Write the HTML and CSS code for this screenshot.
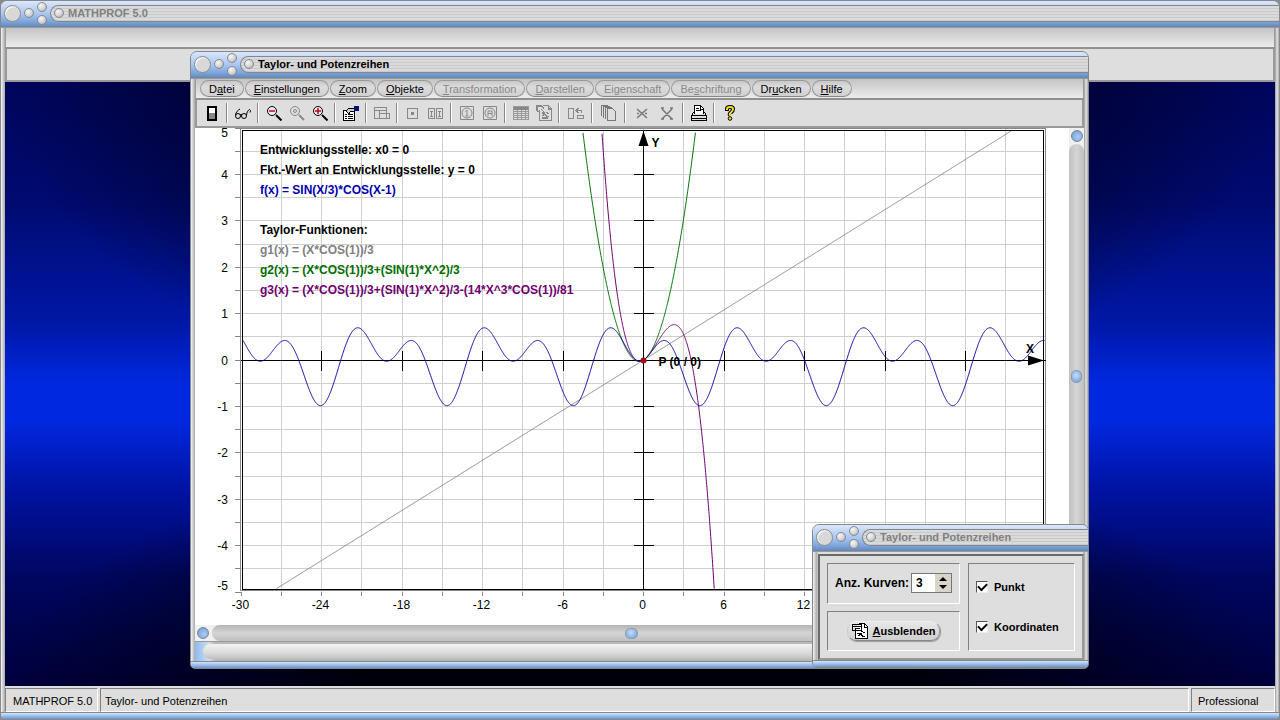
FILE: index.html
```
<!DOCTYPE html>
<html lang="de">
<head>
  <meta charset="UTF-8">
  <title>MATHPROF 5.0</title>
  <link rel="stylesheet" href="styles.css">
</head>
<body>

<div class="window app">
  <header class="titlebar inactive">
    <button class="ball big" aria-label="Schließen"></button>
    <button class="ball" aria-label="Symbol"></button>
    <span class="stack">
      <button class="ball" aria-label="Maximieren"></button>
      <button class="ball" aria-label="Minimieren"></button>
    </span>
    <h1 class="caption"><span class="ball knob"></span>MATHPROF 5.0</h1>
  </header>
  <div class="menubar"></div>
  <div class="toolbar app-toolbar"></div>
  <main class="desktop"></main>
  <footer class="statusbar">
    <span class="pane pane-name">MATHPROF 5.0</span>
    <span class="pane pane-module">Taylor- und Potenzreihen</span>
    <span class="pane pane-edition">Professional</span>
  </footer>
</div>

<section class="window taylor">
  <header class="titlebar">
    <button class="ball big" aria-label="Schließen"></button>
    <button class="ball" aria-label="Symbol"></button>
    <span class="stack">
      <button class="ball" aria-label="Maximieren"></button>
      <button class="ball" aria-label="Minimieren"></button>
    </span>
    <h2 class="caption"><span class="ball knob"></span>Taylor- und Potenzreihen</h2>
  </header>

  <nav class="menubar">
    <button>D<u>a</u>tei</button>
    <button><u>E</u>instellungen</button>
    <button><u>Z</u>oom</button>
    <button><u>O</u>bjekte</button>
    <button disabled><u>T</u>ransformation</button>
    <button disabled><u>D</u>arstellen</button>
    <button disabled>Ei<u>g</u>enschaft</button>
    <button disabled>Be<u>s</u>chriftung</button>
    <button>Dr<u>u</u>cken</button>
    <button><u>H</u>ilfe</button>
  </nav>

  <div class="toolbar">
    <button aria-label="Beenden"><svg viewBox="0 0 16 16"><path d="M3 1h10v15H3z" fill="#000"/><path d="M5 3h6v5H5z" fill="#fff"/><path d="M5 8h6v6H5z" fill="#888"/></svg></button>
    <i class="sep"></i>
    <button aria-label="Ansicht"><svg class="smooth" viewBox="0 0 16 16"><g fill="none" stroke="#000"><circle cx="3" cy="11" r="2.500"/><circle cx="9" cy="11" r="2.500"/><path d="M5 10q1-1 2 0M.5 10C1 7 3 5 5 4M11.500 10C12 7 13 5 14.500 4.500l1 1-.5 2"/></g></svg></button>
    <i class="sep"></i>
    <button aria-label="Verkleinern"><svg class="smooth" viewBox="0 0 16 16"><circle cx="6" cy="6" r="4.500" fill="#eee" stroke="#000"/><path d="M10 10l5.500 5.500" stroke="#000" stroke-width="2"/><path d="M3 6h6" stroke="#c00020" stroke-width="1.500"/></svg></button>
    <button disabled aria-label="Original"><svg class="smooth" viewBox="0 0 16 16"><circle cx="6" cy="6" r="4.500" fill="none" stroke="#888"/><circle cx="6" cy="6" r="1.500" fill="none" stroke="#888"/><path d="M10 10l5 5" stroke="#888" stroke-width="2"/></svg></button>
    <button aria-label="Vergrößern"><svg class="smooth" viewBox="0 0 16 16"><circle cx="6" cy="6" r="4.500" fill="#eee" stroke="#000"/><path d="M10 10l5.500 5.500" stroke="#000" stroke-width="2"/><path d="M3 6h6M6 3v6" stroke="#c00020" stroke-width="1.500"/></svg></button>
    <i class="sep"></i>
    <button aria-label="Eigenschaften"><svg viewBox="0 0 16 16"><path d="M.5 5.500h11v10H.5z" fill="#fff" stroke="#000"/><path d="M2 9h2M5 9h5M2 11h2M5 11h5M2 13h2M5 13h5" stroke="#000"/><path d="M3 6l3-3h5v3l-4 1-1 2z" fill="#ccc" stroke="#000"/><path d="M11 1h5v5h-5z" fill="#101070"/></svg></button>
    <i class="sep"></i>
    <button disabled aria-label="Fenster"><svg viewBox="0 0 16 16"><path d="M.5 2.500h12v11H.5zM1 5.500h12M5.500 6v7M5.500 8.500h10v5h-10z" fill="none" stroke="#888"/></svg></button>
    <i class="sep"></i>
    <button disabled aria-label="Punkt"><svg viewBox="0 0 16 16"><path d="M2.500 3.500h10v10h-10z" fill="none" stroke="#888"/><path d="M6 7h3v3H6z" fill="#888"/></svg></button>
    <button disabled aria-label="Punkte"><svg viewBox="0 0 16 16"><path d="M.5 3.500h6v10h-6zM8.500 3.500h6v10h-6zM2 6h3M2 11h3M10 6h3M10 11h3M3.500 6v5M11.500 6v5" fill="none" stroke="#888"/></svg></button>
    <i class="sep"></i>
    <button disabled aria-label="Text"><svg class="smooth" viewBox="0 0 16 16"><path d="M1.500 1.500h13v13h-13zM6.500 6.500L8 5v6M6.500 11h3" fill="none" stroke="#888"/><circle cx="8" cy="8" r="5" fill="none" stroke="#888"/></svg></button>
    <button disabled aria-label="Beschriftung"><svg class="smooth" viewBox="0 0 16 16"><path d="M1.500 1.500h13v13h-13zM6 11V6h4v5M6 8.500h4" fill="none" stroke="#888"/><circle cx="8" cy="8" r="5" fill="none" stroke="#888"/></svg></button>
    <i class="sep"></i>
    <button disabled aria-label="Tabelle"><svg viewBox="0 0 16 16"><path d="M.5 1.500h15v13H.5zM1 6.500h14M1 8.500h14M1 10.500h14M1 12.500h14M4.500 5v9M8.500 5v9M12.500 5v9" fill="none" stroke="#999"/><path d="M1 2h14v3H1z" fill="#888"/></svg></button>
    <button disabled aria-label="Dokument"><svg viewBox="0 0 16 16"><path d="M3.500 5v10.500h12V3.500l-3-3h-6M12.500 1v3h3M0 1h6l2 3M1 1v5l2 1M5 4l3 3M6 8h3M10 7l3 2M6 11l3-2 2 3 2-1M6 13h6" fill="none" stroke="#888" stroke-width="1.300"/></svg></button>
    <i class="sep"></i>
    <button class="wide" disabled aria-label="Verschieben"><svg viewBox="0 0 16 16"><path d="M.5 3.500h5v10h-5zM9.500 10.500h6v3h-6zM8 5.500h5.500V8M10.500 3L8 5.500 10.500 8" fill="none" stroke="#888"/></svg></button>
    <i class="sep"></i>
    <button class="wide" disabled aria-label="Kopieren"><svg viewBox="0 0 16 16"><path d="M6.500 3.500h5l3 3v9h-8zM4.500 14V2.500h6M2.500 12.500V1.500h6M.5 11V.5h6" fill="none" stroke="#777"/></svg></button>
    <i class="sep"></i>
    <button class="wide" disabled aria-label="Löschen"><svg class="smooth" viewBox="0 0 16 16"><path d="M3 4l10 9M13 4L3 13M3 8.500h2M11 8.500h2" stroke="#777" stroke-width="1.500"/></svg></button>
    <button class="wide" disabled aria-label="Alles löschen"><svg class="smooth" viewBox="0 0 16 16"><path d="M3 4l10 10M13 4L3 14M2 3h3M11 3h3M2 14h3M11 14h3" stroke="#777" stroke-width="1.500"/></svg></button>
    <i class="sep"></i>
    <button aria-label="Drucken"><svg viewBox="0 0 16 16"><path d="M3.500 8.500v-8h6l3 3v5" fill="#fff" stroke="#000"/><path d="M5 3h3M5 5h5M9.500 1v3h3" stroke="#000" fill="none"/><path d="M2.500 7.500L.5 10.500v5h15v-5l-2-3M1 10.500h15M1 13h15" fill="none" stroke="#000"/></svg></button>
    <i class="sep"></i>
    <button aria-label="Hilfe"><svg class="smooth" viewBox="0 0 16 16"><path d="M5 6V4q0-2 3-2t3 2q0 2-2 3.500T8 10" fill="none" stroke="#000" stroke-width="4"/><path d="M5 5V4q0-2 3-2t3 2q0 2-2 3.500T8 10" fill="none" stroke="#f0e020" stroke-width="2"/><circle cx="8" cy="13.500" r="1.800" fill="#f0e020" stroke="#000"/></svg></button>
  </div>

  <div class="workspace">
    <div class="plot">
      <svg id="chart"></svg>
      <div class="legend">
        <p>Entwicklungsstelle: x0 = 0</p>
        <p>Fkt.-Wert an Entwicklungsstelle: y = 0</p>
        <p class="f">f(x) = SIN(X/3)*COS(X-1)</p>
        <p class="gap">Taylor-Funktionen:</p>
        <p class="g1">g1(x) = (X*COS(1))/3</p>
        <p class="g2">g2(x) = (X*COS(1))/3+(SIN(1)*X^2)/3</p>
        <p class="g3">g3(x) = (X*COS(1))/3+(SIN(1)*X^2)/3-(14*X^3*COS(1))/81</p>
      </div>
    </div>
    <div class="scroll scroll-y">
      <button class="dot" aria-label="Nach oben"></button>
      <input type="range" aria-label="Vertikal verschieben" value="50">
      <button class="dot" aria-label="Nach unten"></button>
    </div>
  </div>
  <div class="scroll scroll-x">
    <button class="dot" aria-label="Nach links"></button>
    <input type="range" aria-label="Horizontal verschieben" value="49">
    <button class="dot" aria-label="Nach rechts"></button>
  </div>
  <div class="hint"></div>
</section>

<section class="window tool">
  <header class="titlebar inactive">
    <button class="ball big" aria-label="Schließen"></button>
    <button class="ball" aria-label="Symbol"></button>
    <span class="stack">
      <button class="ball" aria-label="Maximieren"></button>
      <button class="ball" aria-label="Minimieren"></button>
    </span>
    <h2 class="caption"><span class="ball knob"></span>Taylor- und Potenzreihen</h2>
  </header>
  <form class="panel">
    <div class="group count">
      <label for="curves">Anz. Kurven:</label>
      <span class="spin">
        <input type="text" id="curves" value="3">
        <span class="arrows">
          <button type="button" class="up" aria-label="Mehr"></button>
          <button type="button" class="down" aria-label="Weniger"></button>
        </span>
      </span>
    </div>
    <div class="group options">
      <label><input type="checkbox" checked>Punkt</label>
      <label><input type="checkbox" checked>Koordinaten</label>
    </div>
    <div class="group action">
      <button type="button" class="hide">
        <svg viewBox="0 0 16 16"><path d="M3.500 5v10.500h12V3.500l-3-3h-6" fill="#fff" stroke="#000"/><path d="M.5 1.500h9v6h-9zM1 3.500h8M3 5.500h5M12.500 1v3h3M5 10h5M9 8l4 2M6 13l3-2 2 3 2-1" fill="none" stroke="#000"/></svg>
        <span><u>A</u>usblenden</span>
      </button>
    </div>
  </form>
</section>

<script>
  const chart = document.getElementById('chart');
  const margin = { left: 46, right: 23, top: 0, bottom: 33 };
  const xMax = 30;
  const yMax = 5;

  const curves = [
    { color: '#808080', f: x => x * Math.cos(1) / 3 },
    { color: '#007000', f: x => x * Math.cos(1) / 3 + Math.sin(1) * x * x / 3 },
    { color: '#700070', f: x => x * Math.cos(1) / 3 + Math.sin(1) * x * x / 3 - 14 * x ** 3 * Math.cos(1) / 81 },
    { color: '#0000a0', f: x => Math.sin(x / 3) * Math.cos(x - 1) }
  ];

  function add(name, attrs, text) {
    const el = document.createElementNS('http://www.w3.org/2000/svg', name);
    for (const key in attrs) {
      el.setAttribute(key, attrs[key]);
    }
    if (text !== undefined) {
      el.textContent = text;
    }
    chart.appendChild(el);
  }

  function line(x1, y1, x2, y2, cls) {
    add('path', { d: `M${x1} ${y1}L${x2} ${y2}`, class: cls });
  }

  function drawChart() {
    chart.innerHTML = '';

    const left = margin.left;
    const top = margin.top;
    const right = chart.clientWidth - margin.right;
    const bottom = chart.clientHeight - margin.bottom;
    const px = x => left + (x + xMax) / (2 * xMax) * (right - left);
    const py = y => top + (yMax - y) / (2 * yMax) * (bottom - top);
    const snap = v => Math.floor(v) + 0.5;

    // grid and outer ticks
    for (let x = -xMax; x <= xMax; x += 3) {
      const gx = snap(px(x));
      if (Math.abs(x) < xMax) line(gx, top, gx, bottom, 'grid');
      line(gx, bottom, gx, bottom + 4, 'tick');
      if (x % 6 === 0) add('text', { x: gx - 1, y: bottom + 17, class: 'label-x' }, x);
    }
    for (let i = -yMax * 2; i <= yMax * 2; i++) {
      const gy = snap(py(i / 2));
      if (Math.abs(i) < yMax * 2) line(left, gy, right, gy, 'grid');
      line(left - 6, gy, left, gy, 'tick');
      if (i % 2 === 0) {
        // keep the outermost labels inside the frame
        const shift = i === 10 ? 8 : i === -10 ? -3 : 4;
        add('text', { x: left - 13, y: gy + shift, class: 'label-y' }, i / 2);
      }
    }

    add('rect', { x: left - 0.5, y: top + 0.5, width: right - left, height: bottom - top - 2, class: 'bevel' });
    add('rect', { x: left + 1.5, y: top + 2.5, width: right - left - 4, height: bottom - top - 5, class: 'frame' });

    // axes
    const ox = snap(px(0));
    const oy = snap(py(0));
    line(left, oy, right, oy, 'axis');
    line(ox, top + 3, ox, bottom - 2, 'axis');
    for (let x = -24; x <= 24; x += 6) {
      if (x) line(snap(px(x)), oy - 10, snap(px(x)), oy + 10, 'axis');
    }
    for (let y = -4; y <= 4; y++) {
      if (y) line(ox - 10, snap(py(y)), ox + 10, snap(py(y)), 'axis');
    }
    add('path', { d: `M${ox} ${top + 3}l5 15h-10z` });
    add('path', { d: `M${right - 2} ${oy}l-16 5v-10z` });

    curves.forEach(curve => {
      let d = '';
      let pen = 'M';
      for (let x = -xMax + 0.15; x < xMax - 0.1; x += 0.02) {
        const y = curve.f(x);
        if (Math.abs(y) > 4.93) {
          pen = 'M';
          continue;
        }
        d += `${pen}${px(x).toFixed(2)} ${py(y).toFixed(2)}`;
        pen = 'L';
      }
      add('path', { d: d, stroke: curve.color, class: 'curve' });
    });

    add('circle', { cx: ox, cy: oy, r: 3, fill: '#a01010' });
    add('text', { x: ox + 15, y: oy + 5, class: 'mark' }, 'P (0 / 0)');
    add('text', { x: ox + 8, y: top + 19, class: 'mark' }, 'Y');
    add('text', { x: right - 20, y: oy - 8, class: 'mark' }, 'X');
  }

  window.addEventListener('resize', drawChart);
  drawChart();
</script>

</body>
</html>
```
FILE: styles.css
```
* {
  box-sizing: border-box;
}

body {
  margin: 0;
  height: 100vh;
  position: relative;
  overflow: hidden;
  background: #8a8a8a;
  font: 11px "Liberation Sans", Arial, sans-serif;
  color: #000;
}

button, input {
  font: inherit;
  color: inherit;
  margin: 0;
  padding: 0;
}

h1, h2, p {
  margin: 0;
  font-size: 11px;
}

/* window chrome */
.window {
  display: flex;
  flex-direction: column;
  border: 1px solid #85888f;
  border-radius: 7px 7px 5px 5px;
  background: linear-gradient(90deg, #f4f4f4, #a8a8a8 4px, #dedede 5px, #dedede calc(100% - 5px), #999 calc(100% - 4px), #e4e4e4 calc(100% - 2px), #aaa);
  overflow: hidden;
}

.window::after {
  content: "";
  height: 6px;
  flex: none;
  border-top: 1px solid #888;
  background: linear-gradient(#d4e4f8, #a4c6f2 40%, #6f93c2);
}

.app {
  height: 100vh;
}

.taylor {
  position: absolute;
  left: 190px;
  top: 51px;
  width: 899px;
  height: 618px;
}

.tool {
  position: absolute;
  left: 812px;
  top: 524px;
  width: 277px;
  height: 144px;
}

.titlebar {
  flex: none;
  height: 27px;
  display: flex;
  align-items: center;
  gap: 3px;
  padding: 0 0 2px 3px;
  border-bottom: 1px solid #999;
  background: linear-gradient(#dbe7fb, #ccdcf5 15%, #a9c6ee 50%, #7ba5dc 80%, #6686b3);
}

.ball {
  flex: none;
  width: 10px;
  height: 10px;
  border: 1px solid #848b95;
  border-radius: 50%;
  background: radial-gradient(circle at 35% 30%, #f6f6f6, #d4d4d4 55%, #9c9c9c);
}

.ball.big {
  width: 17px;
  height: 17px;
  background: #d8d8d6;
  box-shadow: inset 1px 1px 1px #fff;
}

.stack {
  display: flex;
  flex-direction: column;
  gap: 3px;
}

.caption {
  flex: 1;
  height: 17px;
  display: flex;
  align-items: center;
  gap: 4px;
  padding-left: 3px;
  border: 1px solid #808790;
  border-right: 0;
  border-radius: 9px 0 0 9px;
  background: repeating-linear-gradient(#dadada, #dadada 2px, #cacaca 2px, #cacaca 3px);
  line-height: 15px;
}

.inactive .caption {
  color: #808080;
}

.menubar {
  flex: none;
  height: 21px;
  margin: 0 4px;
  display: flex;
  align-items: center;
  gap: 1px;
  padding-left: 4px;
  border-bottom: 2px solid #909090;
  border-left: 1px solid #999;
  border-right: 1px solid #999;
  background: linear-gradient(#c4c4c4, #ececec);
}

.menubar button {
  height: 17px;
  padding: 0 8px;
  border: 1px solid #999;
  border-bottom-color: #888;
  border-radius: 9px;
  background: linear-gradient(#c8c8c8, #dcdcdc 40%, #d0d0d0);
  line-height: 14px;
}

button:disabled {
  color: #888;
}

.toolbar {
  flex: none;
  height: 28px;
  margin: 0 4px;
  display: flex;
  align-items: center;
  padding-left: 3px;
  border: 1px solid #999;
  border-width: 0 2px 2px;
  background: #dedede;
}

.app-toolbar {
  height: 33px;
}

.toolbar button {
  width: 23px;
  height: 20px;
  border: 0;
  background: none;
}

.toolbar button.wide {
  width: 25px;
}

.toolbar svg, .hide svg {
  width: 16px;
  height: 16px;
  display: block;
  margin: 0 auto;
  shape-rendering: crispEdges;
}

.toolbar svg.smooth {
  shape-rendering: auto;
}

.sep {
  width: 2px;
  height: 20px;
  margin: 0 3px;
  border-left: 1px solid #888;
  border-right: 1px solid #fff;
}

.desktop {
  flex: 1;
  margin: 0 4px;
  background:
    radial-gradient(ellipse 50% 55% at 50% 0, #000018 40%, transparent),
    radial-gradient(ellipse 50% 40% at 50% 100%, #000008 40%, transparent),
    linear-gradient(#00055c, #000a70 20%, #0018a8 40%, #0028e0 50%, #0028e0 56%, #0012a0 68%, #000660 82%, #00003c);
}

.statusbar {
  flex: none;
  height: 26px;
  margin: 0 4px;
  padding-top: 2px;
  display: flex;
  gap: 2px;
  background: #dedede;
}

.pane {
  border: 1px solid;
  border-color: #808080 #fff #fff #808080;
  line-height: 24px;
  padding-left: 6px;
}

.pane-name {
  width: 93px;
  padding-left: 7px;
}

.pane-module {
  flex: 1;
  padding-left: 4px;
}

.pane-edition {
  width: 84px;
}

/* chart window */
.workspace {
  flex: 1;
  min-height: 0;
  display: flex;
  margin: 0 4px;
}

.plot {
  flex: 1;
  position: relative;
  background: #fff;
}

.plot svg {
  display: block;
  width: 100%;
  height: 100%;
}

.legend {
  position: absolute;
  left: 65px;
  top: 12px;
  line-height: 20px;
  font-weight: bold;
}

.legend p {
  font-size: 12px;
}

.legend .gap {
  margin-top: 20px;
}

.f {
  color: #0000b0;
}

.g1 {
  color: #808080;
}

.g2 {
  color: #007000;
}

.g3 {
  color: #700070;
}

.grid, .tick, .axis, .bevel, .frame {
  fill: none;
  shape-rendering: crispEdges;
}

.grid {
  stroke: #cfcfcf;
}

.tick, .bevel {
  stroke: #888;
}

.axis, .frame {
  stroke: #000;
}

.curve {
  fill: none;
}

.label-x {
  font-size: 12px;
  text-anchor: middle;
}

.label-y {
  font-size: 12px;
  text-anchor: end;
}

.mark {
  font-size: 12px;
  font-weight: bold;
}

.scroll {
  display: flex;
  align-items: center;
  background: #f0f0f0;
}

.scroll-y {
  width: 15px;
  flex-direction: column;
  padding: 2px 0;
}

.scroll-x {
  flex: none;
  height: 16px;
  margin: 0 4px;
  padding: 0 2px;
}

.dot {
  flex: none;
  width: 12px;
  height: 12px;
  border: 1px solid #7b8794;
  border-radius: 50%;
  background: radial-gradient(circle at 60% 60%, #a8ccf8, #6f98cf);
}

.scroll input {
  appearance: none;
  flex: 1;
  min-width: 0;
  min-height: 0;
  border-radius: 8px;
}

.scroll-x input {
  height: 16px;
  margin: 0 3px;
  background: linear-gradient(#b4b4b4, #d4d4d4 50%, #c0c0c0);
}

.scroll-y input {
  writing-mode: vertical-lr;
  width: 15px;
  margin: 2px 0;
  background: linear-gradient(90deg, #c0c0c0, #d4d4d4 50%, #c0c0c0);
}

.scroll input::-webkit-slider-thumb {
  appearance: none;
  width: 13px;
  height: 11px;
  border: 1px solid #8a9bb0;
  border-radius: 5px;
  background: radial-gradient(circle at 45% 40%, #c4defc, #6f98cf);
}

.scroll-y input::-webkit-slider-thumb {
  width: 11px;
  height: 13px;
}

.hint {
  flex: none;
  height: 20px;
  margin: 0 4px;
  padding: 2px 0 2px 8px;
  border-top: 1px solid #999;
  background: linear-gradient(90deg, #8fb9ee, #cfdff2 14px, #b8b8b8 20px);
}

.hint::before {
  content: "";
  display: block;
  height: 100%;
  border-radius: 9px 0 0 9px;
  background: linear-gradient(#f2f2f2, #dadada 60%, #c0c0c0);
}

/* tool window */
.panel {
  flex: 1;
  margin: 2px 4px 0 5px;
  padding: 7px;
  display: grid;
  grid-template-columns: 133px 1fr;
  grid-template-rows: 1fr 1fr;
  gap: 7px 8px;
  border: 2px solid;
  border-color: #6a6a6a #999 #999 #6a6a6a;
  background: #dedede;
  font-weight: bold;
}

.group {
  border: 1px solid;
  border-color: #808080 #fff #fff #808080;
  display: flex;
  align-items: center;
}

.count {
  gap: 2px;
  padding-left: 7px;
}

.count label {
  font-size: 12px;
}

.spin {
  display: flex;
  width: 41px;
  height: 20px;
  border: 1px solid #777;
  background: #fff;
}

.spin input {
  width: 23px;
  border: 0;
  padding-left: 4px;
  background: #fff;
  font-size: 12px;
}

.arrows {
  flex: 1;
  display: flex;
  flex-direction: column;
  justify-content: center;
  align-items: center;
  gap: 4px;
  background: #d8d4c8;
}

.arrows button {
  width: 0;
  height: 0;
  border: 4px solid transparent;
  background: none;
}

.arrows .up {
  border-top: 0;
  border-bottom-color: #000;
}

.arrows .down {
  border-bottom: 0;
  border-top-color: #000;
}

.options {
  grid-row: 1 / 3;
  grid-column: 2;
  flex-direction: column;
  align-items: flex-start;
  justify-content: center;
  gap: 28px;
  padding-left: 7px;
}

.options label {
  display: flex;
  align-items: center;
  gap: 6px;
  height: 12px;
}

.options input {
  appearance: none;
  width: 12px;
  height: 12px;
  border: 1px solid;
  border-color: #555 #eee #eee #555;
  background: #fff;
  display: grid;
  place-items: center;
}

.options input:checked::before {
  content: "";
  width: 7px;
  height: 4px;
  border: solid #000;
  border-width: 0 0 2px 2px;
  transform: translateY(-1px) rotate(-45deg);
}

.action {
  justify-content: center;
}

.hide {
  display: flex;
  align-items: center;
  gap: 5px;
  height: 20px;
  padding: 0 4px;
  border: 1px solid;
  border-color: #eee #999 #888 #ccc;
  border-radius: 9px;
  background: linear-gradient(#e8e8e8, #cfcfcf);
  box-shadow: 1px 1px 1px #999;
  font-weight: bold;
}
```
